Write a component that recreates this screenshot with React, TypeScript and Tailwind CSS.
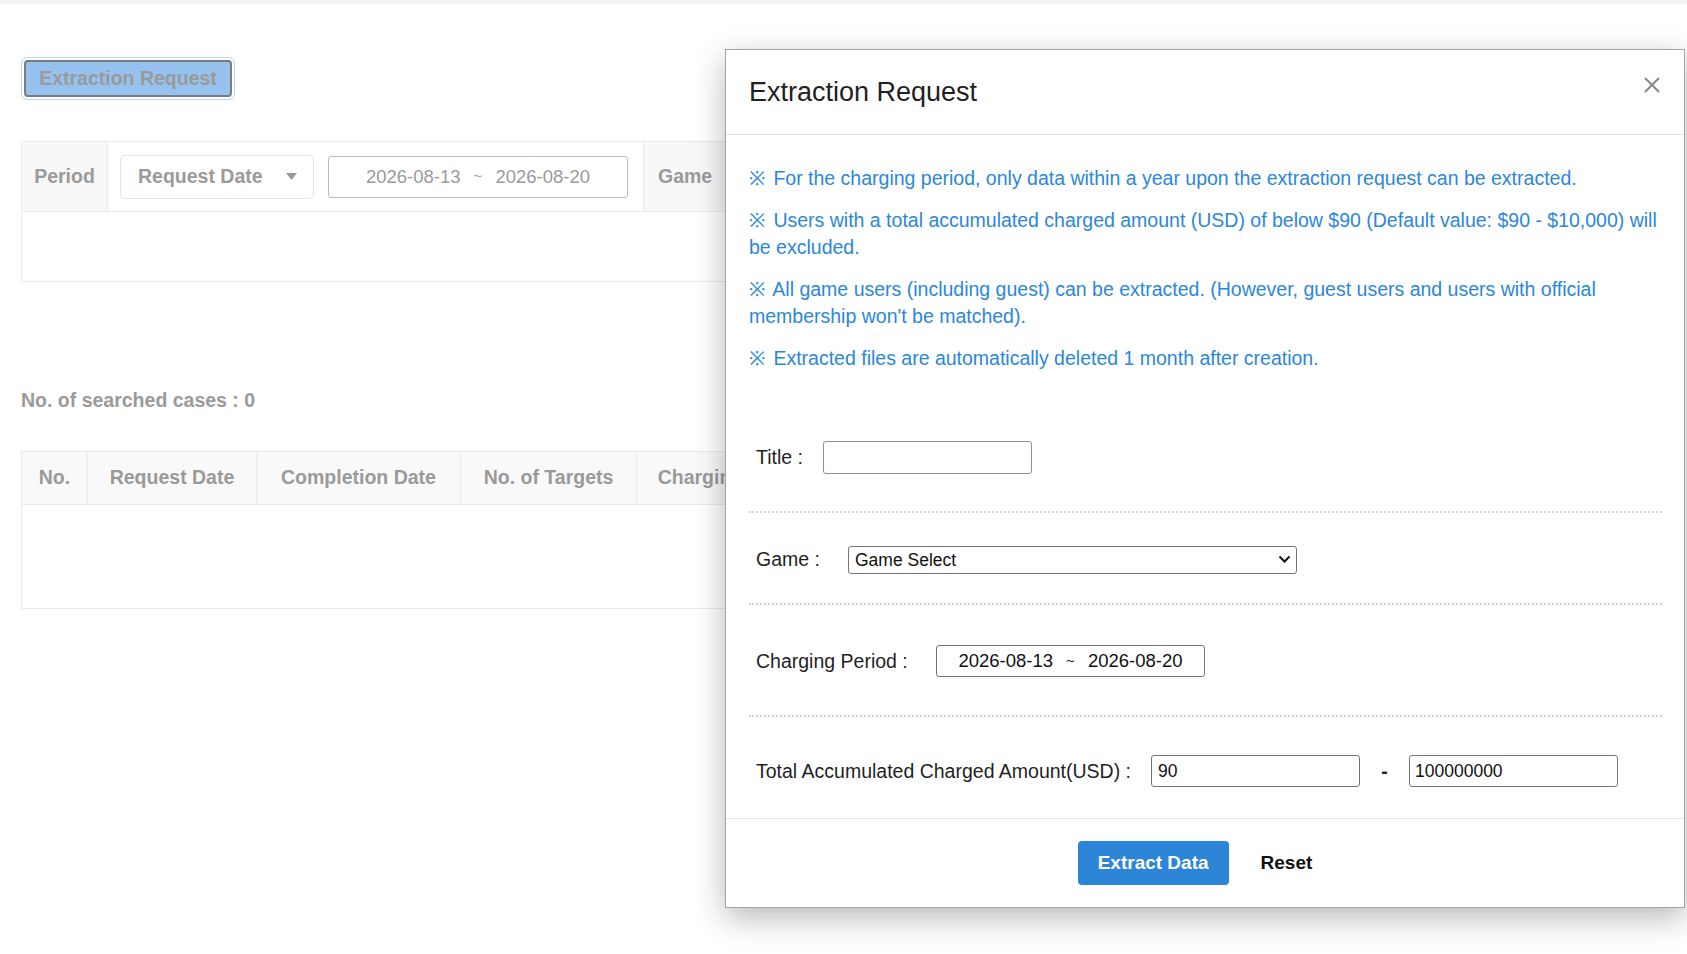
import { X } from 'lucide-react'

const notes = [
  'For the charging period, only data within a year upon the extraction request can be extracted.',
  'Users with a total accumulated charged amount (USD) of below $90 (Default value: $90 - $10,000) will be excluded.',
  "All game users (including guest) can be extracted. (However, guest users and users with official membership won't be matched).",
  'Extracted files are automatically deleted 1 month after creation.',
]

const resultColumns = [
  { label: 'No.', width: 'w-[65px]' },
  { label: 'Request Date', width: 'w-[169px]' },
  { label: 'Completion Date', width: 'w-[204px]' },
  { label: 'No. of Targets', width: 'w-[176px]' },
  { label: 'Charging Period', width: 'w-[194px]' },
  { label: 'Status', width: 'w-[160px]' },
  { label: 'Download', width: 'flex-1' },
]

function DateRange({ className }: { className: string }) {
  return (
    <div className={`flex items-center justify-center text-[18.5px] ${className}`}>
      <span>2026-08-13</span>
      <span className="mx-[13px] text-[15px]">~</span>
      <span>2026-08-20</span>
    </div>
  )
}

function FormRow({ children, className }: { children: React.ReactNode; className: string }) {
  return <div className={`flex items-center pl-[7px] ${className}`}>{children}</div>
}

function ExtractionModal() {
  return (
    <div className="absolute left-[725px] top-[49px] flex w-[960px] flex-col border border-[#a3a3a3] bg-white shadow-[0_10px_30px_rgba(0,0,0,0.28)]">
      <div className="relative flex h-[85px] items-center border-b border-[#e3e3e3] pl-[23px]">
        <h2 className="text-[27px] text-[#1f1f1f]">Extraction Request</h2>
        <button className="absolute right-[19px] top-[22px] text-[#8a8a8a]">
          <X size={26} strokeWidth={1.9} />
        </button>
      </div>

      <div className="pl-[23px] pr-[22px] pt-[30px] text-[19.5px] text-[#1f1f1f]">
        <div className="text-[#2b87da]">
          {notes.map((note) => (
            <p key={note} className="mb-[15px] leading-[27px]">
              <span className="mr-[3px]">※</span> {note}
            </p>
          ))}
        </div>

        <FormRow className="border-b-2 border-dotted border-[#d4d4d4] pb-[37px] pt-[54px]">
          <span className="w-[67px]">Title :</span>
          <input className="h-[33px] w-[209px] rounded-[3px] border border-[#8f8f8f] px-[7px] text-[17.5px]" />
        </FormRow>

        <FormRow className="border-b-2 border-dotted border-[#d4d4d4] pb-[29px] pt-[32px]">
          <span className="w-[92px]">Game :</span>
          <div className="relative">
            <select className="h-[28px] w-[449px] appearance-none rounded-[3px] border border-[#767676] bg-white pl-[6px] text-[17.5px] text-[#111]">
              <option>Game Select</option>
            </select>
            <svg
              className="pointer-events-none absolute right-[6px] top-[8px]"
              width="13"
              height="12"
              viewBox="0 0 13 12"
              fill="none"
              stroke="#111"
              strokeWidth="2"
            >
              <path d="M1.5 3.5 6.5 8.5 11.5 3.5" />
            </svg>
          </div>
        </FormRow>

        <FormRow className="border-b-2 border-dotted border-[#d4d4d4] pb-[38px] pt-[40px]">
          <span className="w-[180px]">Charging Period :</span>
          <DateRange className="h-[32px] w-[269px] rounded-[3px] border border-[#767676] text-[#111]" />
        </FormRow>

        <FormRow className="pb-[31px] pt-[38px]">
          <span className="w-[395px]">Total Accumulated Charged Amount(USD) :</span>
          <input
            defaultValue="90"
            className="h-[32px] w-[209px] rounded-[3px] border border-[#767676] px-[6px] text-[17.5px] text-[#111]"
          />
          <span className="w-[49px] text-center font-bold">-</span>
          <input
            defaultValue="100000000"
            className="h-[32px] w-[209px] rounded-[3px] border border-[#767676] px-[5px] text-[17.5px] text-[#111]"
          />
        </FormRow>
      </div>

      <div className="flex justify-center border-t border-[#e3e3e3] py-[22px]">
        <button className="h-[44px] rounded-[4px] bg-[#2d85d7] px-[20px] text-[19px] font-bold text-white">
          Extract Data
        </button>
        <button className="ml-[12px] h-[44px] px-[20px] text-[19px] font-bold text-[#111]">Reset</button>
      </div>
    </div>
  )
}

export default function App() {
  return (
    <div className="relative h-[954px] w-full overflow-hidden bg-white font-['Liberation_Sans',Arial,sans-serif]">
      <div className="h-[4px] bg-[#f4f5f7]" />

      <div className="px-[21px] text-[#9a9a9a]">
        <div className="mt-[53px] h-[43px] w-[214px] rounded-[6px] border border-[#b9d8f7] p-[2px]">
          <button className="h-full w-full rounded-[4px] border-2 border-[#7b7b7b] bg-[#95c2ef] text-[19.5px] font-bold text-[#9a9a9a]">
            Extraction Request
          </button>
        </div>

        <div className="mt-[41px] w-[1645px] border border-[#ebebeb] text-[19.5px] font-bold">
          <div className="flex h-[69px]">
            <div className="flex w-[86px] items-center justify-center border-r border-[#ebebeb] bg-[#f8f8f8]">Period</div>
            <div className="flex w-[535px] items-center gap-[14px] pl-[12px]">
              <div className="flex h-[44px] w-[194px] items-center justify-between rounded-[5px] border border-[#e4e4e4] pl-[17px] pr-[16px]">
                <span>Request Date</span>
                <svg width="11" height="7" viewBox="0 0 11 7">
                  <path d="M0 0h11L5.5 7z" fill="#9a9a9a" />
                </svg>
              </div>
              <DateRange className="h-[42px] w-[300px] rounded-[3px] border border-[#bdbdbd] font-normal text-[#9a9a9a]" />
            </div>
            <div className="flex w-[87px] items-center border-l border-[#ebebeb] bg-[#f8f8f8] pl-[14px]">Game</div>
            <div className="flex-1" />
          </div>
          <div className="h-[70px] border-t border-[#ebebeb]" />
        </div>

        <p className="mt-[107px] text-[19.5px] font-bold leading-[22px]">No. of searched cases : 0</p>

        <div className="mt-[40px] w-[1645px] border border-[#ebebeb] text-[19.5px] font-bold">
          <div className="flex h-[52px] bg-[#f9f9f9]">
            {resultColumns.map((col, i) => (
              <div
                key={col.label}
                className={`flex items-center justify-center ${col.width} ${i > 0 ? 'border-l border-[#ebebeb]' : ''}`}
              >
                {col.label}
              </div>
            ))}
          </div>
          <div className="h-[104px] border-t border-[#ebebeb]" />
        </div>
      </div>

      <ExtractionModal />
    </div>
  )
}
